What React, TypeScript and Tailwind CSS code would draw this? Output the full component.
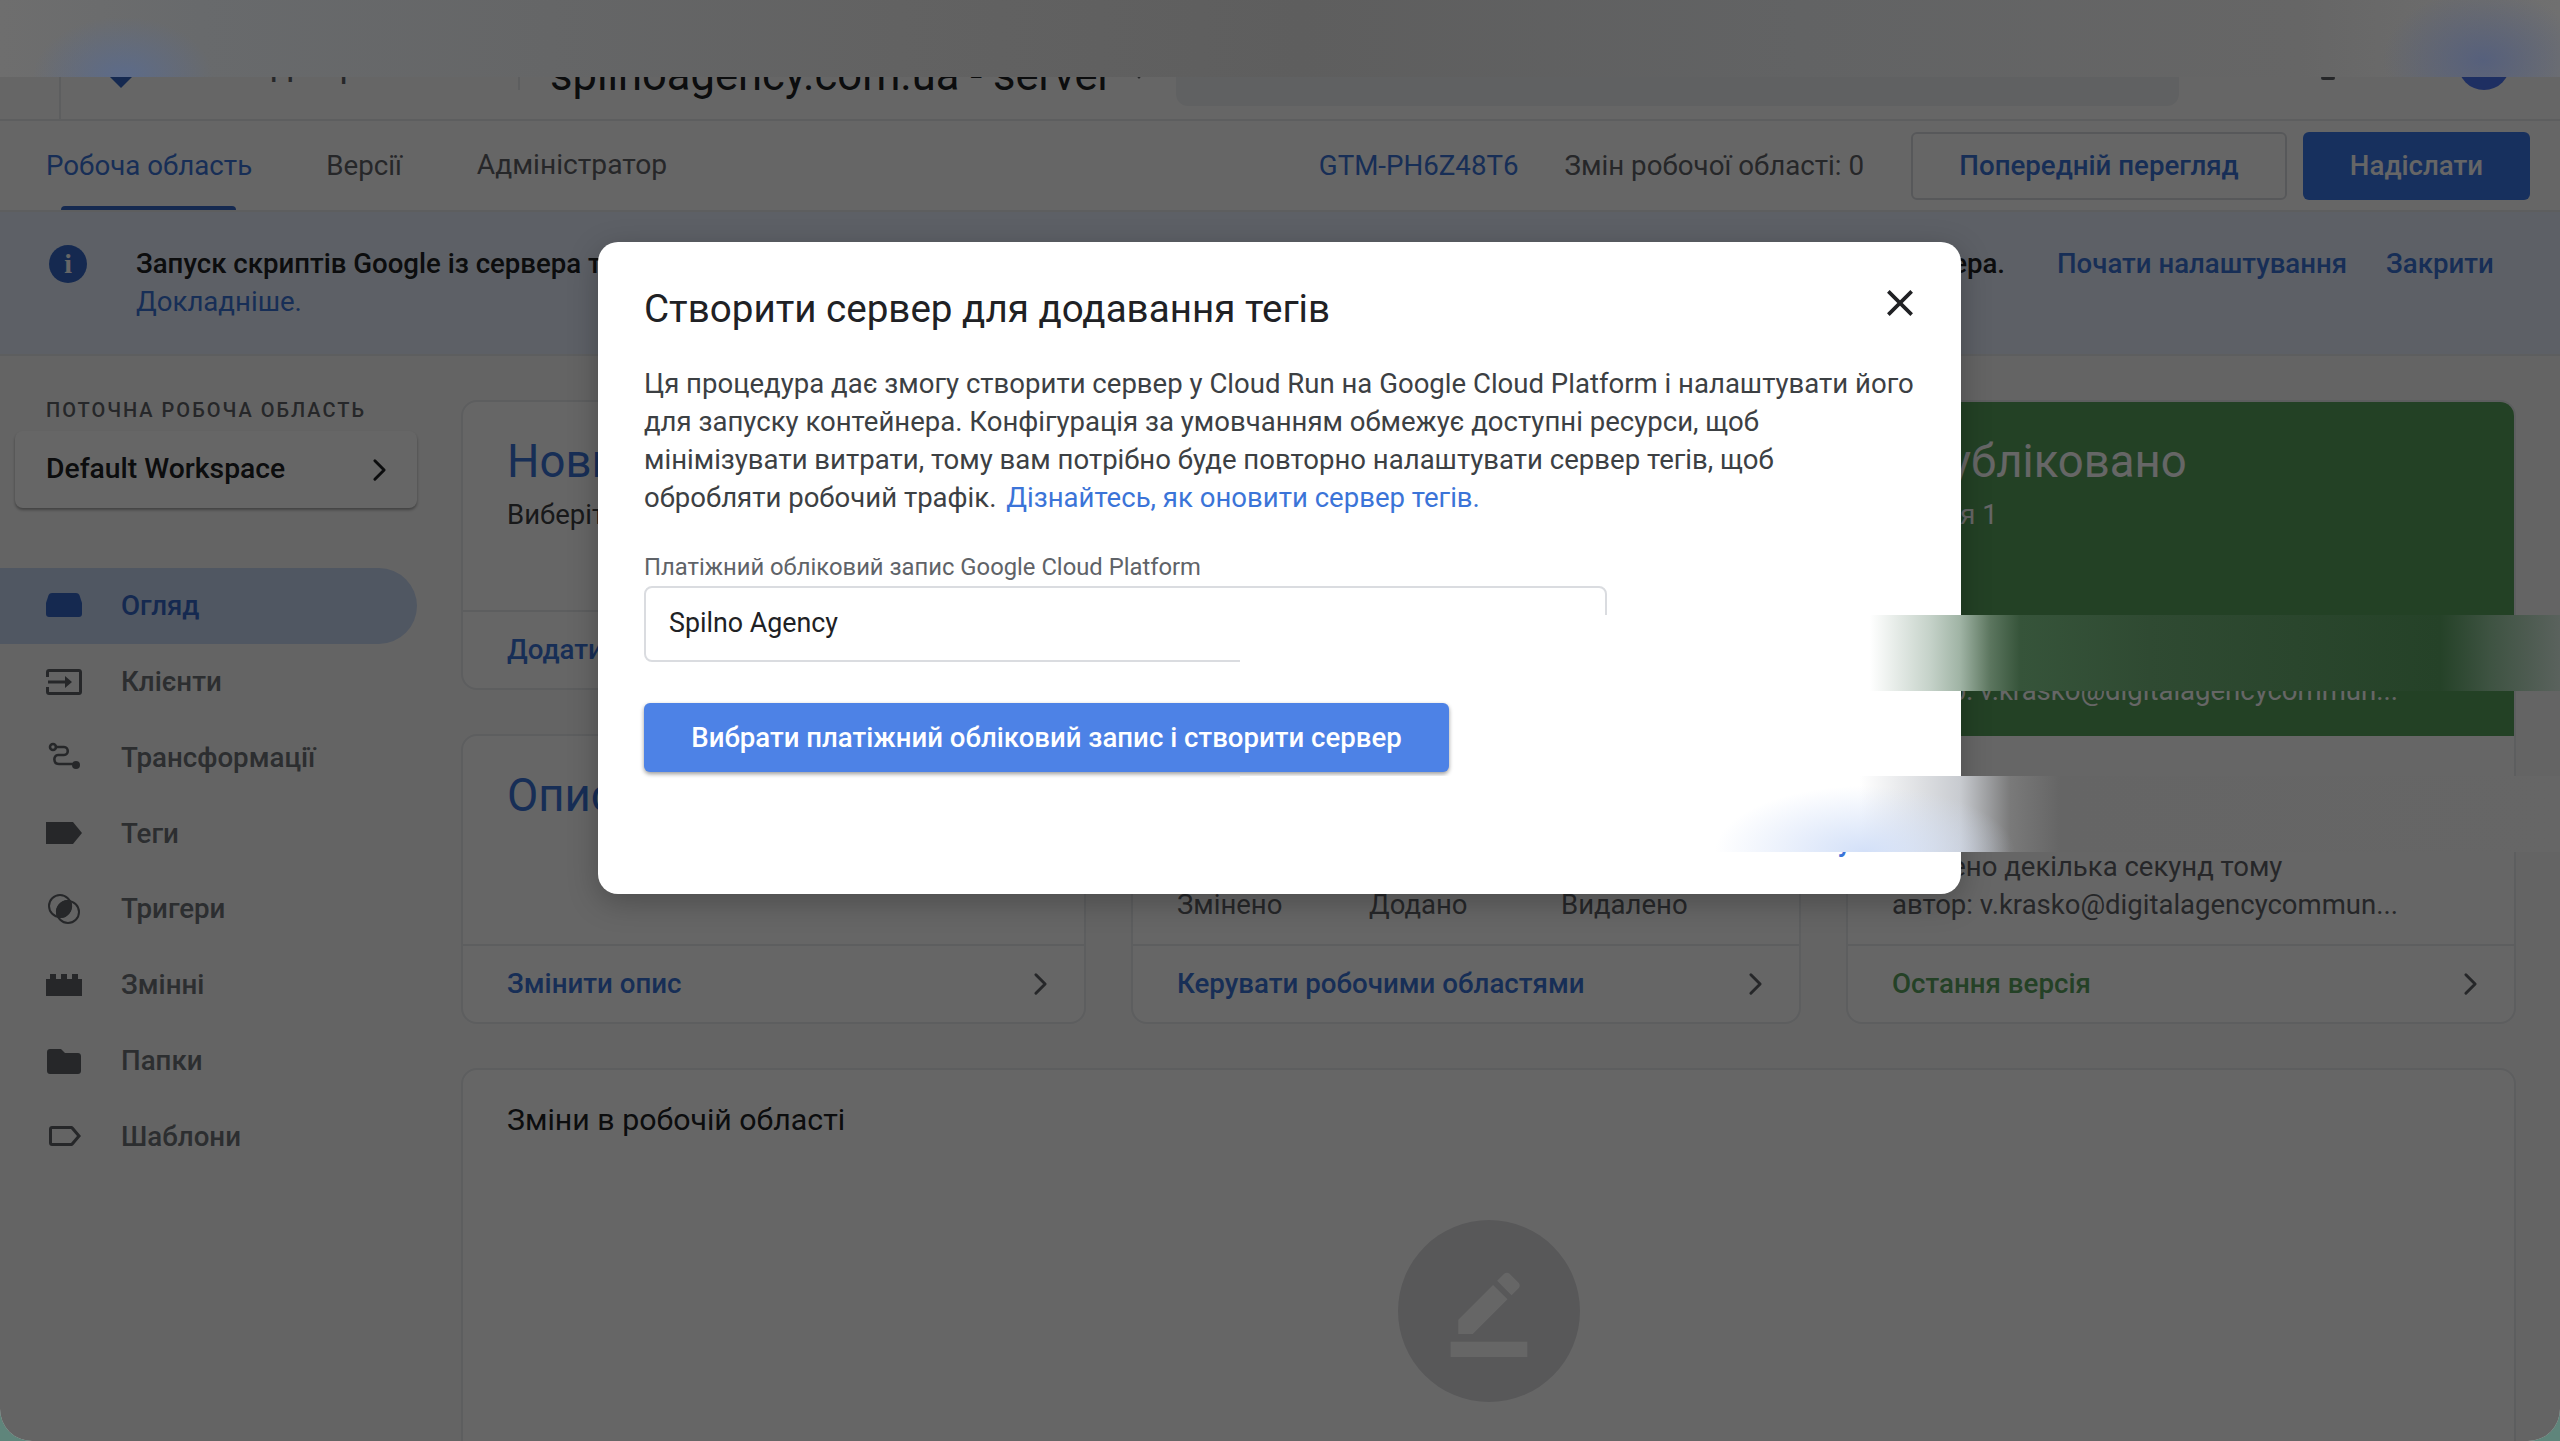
import type { ReactNode } from 'react'

const FONT = "font-['Roboto','Noto_Sans',sans-serif]"

function Chevron({ className }: { className: string }) {
  return (
    <svg viewBox="0 0 16 26" className={className} fill="none" stroke="currentColor" strokeWidth="3.2" strokeLinecap="round" strokeLinejoin="round">
      <path d="M3 3l10 10L3 23" />
    </svg>
  )
}

const ICONS: Record<string, ReactNode> = {
  overview: <path d="M6 2h24c1.600 0 2.800.8 3.400 2L36 12v11c0 1.700-1.300 3-3 3H3c-1.700 0-3-1.300-3-3V12l2.600-8C3.200 2.800 4.400 2 6 2z" />,
  clients: (
    <>
      <path d="M3 2h30c1.700 0 3 1.300 3 3v20c0 1.700-1.300 3-3 3H3c-1.700 0-3-1.300-3-3v-5h3v5h30V5H3v5H0V5c0-1.700 1.300-3 3-3z" />
      <path d="M19 21l7-6-7-6v4.500H2v3h17z" />
    </>
  ),
  transforms: (
    <g fill="none" stroke="currentColor" strokeWidth="2.600" strokeLinecap="round">
      <circle cx="7" cy="5" r="3" />
      <path d="M10 5h8c5 0 5 8 0 8h-6c-5 0-5 9 1 9h13" />
      <circle cx="30" cy="23" r="4" fill="currentColor" stroke="none" />
    </g>
  ),
  tags: <path d="M0 4h27l9 11-9 11H0z" />,
  triggers: (
    <>
      <circle cx="14" cy="12" r="11" fill="none" stroke="currentColor" strokeWidth="2" />
      <circle cx="22" cy="18" r="11" fill="none" stroke="currentColor" strokeWidth="2" />
      <path d="M11.460 23.720A12 12 0 0 0 24.540 6.280A12 12 0 0 0 11.460 23.720z" />
    </>
  ),
  variables: <path d="M0 9h4V4h6v5h5V4h6v5h5V4h6v5h4v17H0z" />,
  folders: <path d="M4 3h11l4 4h13c1.700 0 3 1.300 3 3v15c0 1.700-1.300 3-3 3H4c-1.700 0-3-1.300-3-3V6c0-1.700 1.300-3 3-3z" />,
  templates: <path fillRule="evenodd" d="M6 5h19c1 0 2 .5 2.600 1.300L35 15l-7.400 8.700c-.6.8-1.600 1.300-2.600 1.300H6c-1.700 0-3-1.300-3-3V8c0-1.700 1.300-3 3-3zm0 3v14h19l6-7-6-7z" />,
}

const NAV = [
  { key: 'overview', label: 'Огляд', active: true },
  { key: 'clients', label: 'Клієнти' },
  { key: 'transforms', label: 'Трансформації' },
  { key: 'tags', label: 'Теги' },
  { key: 'triggers', label: 'Тригери' },
  { key: 'variables', label: 'Змінні' },
  { key: 'folders', label: 'Папки' },
  { key: 'templates', label: 'Шаблони' },
]

function Sidebar() {
  return (
    <aside className="w-[461px] shrink-0">
      <div className="pl-[46px] pt-[42px] text-[20px] leading-[24px] font-medium tracking-[2px] text-[#5f6368]">ПОТОЧНА РОБОЧА ОБЛАСТЬ</div>
      <div className="ml-[15px] mt-[9px] flex h-[77px] w-[402px] items-center justify-between rounded-[8px] bg-white pl-[31px] pr-[30px] shadow-[0_2px_3px_rgba(0,0,0,0.35)]">
        <span className="text-[28.3px] font-medium text-[#202124]">Default Workspace</span>
        <Chevron className="h-[24px] w-[15px] text-[#202124]" />
      </div>
      <nav className="mt-[60px]">
        {NAV.map(item => (
          <div key={item.key} className={item.active ? 'flex h-[75.8px] w-[417px] items-center rounded-r-full bg-[#c8d9f5] pl-[46px]' : 'flex h-[75.8px] w-[417px] items-center pl-[46px]'}>
            <svg viewBox="0 0 36 30" className={item.active ? 'h-[30px] w-[36px] fill-current text-[#3568c8]' : 'h-[30px] w-[36px] fill-current text-[#5f6368]'}>
              {ICONS[item.key]}
            </svg>
            <span className={item.active ? 'ml-[39px] text-[27.7px] font-medium text-[#3568c8]' : 'ml-[39px] text-[27.7px] font-medium text-[#6f7378]'}>{item.label}</span>
          </div>
        ))}
      </nav>
    </aside>
  )
}

function CardFooter({ label, green }: { label: string; green?: boolean }) {
  return (
    <div className="flex h-[78px] shrink-0 items-center justify-between border-t-2 border-[#e8eaed] pl-[44px] pr-[36px]">
      <span className={green ? 'text-[27.7px] font-medium text-[#5aa35f]' : 'text-[27.7px] font-medium text-[#3b74d8]'}>{label}</span>
      <Chevron className="h-[24px] w-[15px] text-[#5f6368]" />
    </div>
  )
}

function Card({ title, sub, footer }: { title: string; sub?: string; footer: string }) {
  return (
    <div className="flex h-[290px] flex-col rounded-[16px] border-2 border-[#e8eaed] bg-white">
      <div className="flex-1 pl-[44px] pt-[30px]">
        {/* the dialog covers the rest of these lines */}
        <div className="w-[130px] overflow-hidden whitespace-nowrap text-[45.5px] leading-[60px] text-[#3b74d8]">{title}</div>
        {sub && <div className="mt-[4px] w-[130px] overflow-hidden whitespace-nowrap text-[27.5px] leading-[38px] text-[#3c4043]">{sub}</div>}
      </div>
      <CardFooter label={footer} />
    </div>
  )
}

function MainArea() {
  return (
    <main className="flex-1 pr-[45px] pt-[44px]">
      <div className="grid grid-cols-[625px_670px_670px] gap-x-[45px]">
        <div className="flex flex-col gap-y-[44px]">
          <Card title="Новий тег" sub="Виберіть тип тега" footer="Додати новий тег" />
          <Card title="Опис" footer="Змінити опис" />
        </div>
        <div className="flex h-[624px] flex-col rounded-[16px] border-2 border-[#e8eaed] bg-white">
          <div className="flex flex-1 flex-col justify-end pb-[20px] pl-[44px] text-[27.5px] leading-[38px] text-[#5f6368]">
            <div className="flex">
              <span className="w-[192px]">Змінено</span>
              <span className="w-[192px]">Додано</span>
              <span>Видалено</span>
            </div>
          </div>
          <CardFooter label="Керувати робочими областями" />
        </div>
        <div className="flex h-[624px] flex-col overflow-hidden rounded-[16px] border-2 border-[#e8eaed] bg-white">
          <div className="h-[334px] shrink-0 bg-[#57a25c] pl-[44px] pt-[30px] text-white">
            <div className="text-[45.5px] leading-[60px]">Опубліковано</div>
            <div className="mt-[4px] text-[27.5px] leading-[38px]">Версія 1</div>
            <div className="mt-[100px] truncate pr-[60px] text-[27.5px] leading-[38px]">Змінено декілька секунд тому</div>
            <div className="truncate pr-[60px] text-[27.5px] leading-[38px]">автор: v.krasko@digitalagencycommun...</div>
          </div>
          <div className="flex flex-1 flex-col justify-between pb-[20px] pl-[44px] pt-[38px] text-[27.5px] leading-[38px] text-[#5f6368]">
            <div className="text-[32px] text-[#202124]">Поточна версія</div>
            <div>
              <div>Змінено декілька секунд тому</div>
              <div>автор: v.krasko@digitalagencycommun...</div>
            </div>
          </div>
          <CardFooter label="Остання версія" green />
        </div>
      </div>
      <div className="mt-[44px] h-[500px] rounded-[16px] border-2 border-[#e8eaed] bg-white pl-[44px] pt-[30px]">
        <div className="text-[30.3px] leading-[40px] text-[#202124]">Зміни в робочій області</div>
        <div className="ml-[891px] mt-[80px] flex h-[182px] w-[182px] items-center justify-center rounded-full bg-[#dcdcdf]">
          <svg viewBox="0 0 24 24" className="h-[92px] w-[92px] fill-white">
            <path d="M22 24H2v-4h20v4zM13.060 5.190l3.750 3.750L7.750 18H4v-3.750l9.060-9.060zm4.820 2.680-3.750-3.750 1.830-1.830c.39-.39 1.020-.39 1.410 0l2.340 2.340c.39.39.39 1.020 0 1.410l-1.830 1.830z" />
          </svg>
        </div>
      </div>
    </main>
  )
}

function Header() {
  return (
    <header className="flex h-[121px] items-start border-b-2 border-[#e8eaed] bg-white">
      <div className="ml-[59px] h-full w-[2px] bg-[#e8eaed]" />
      <svg viewBox="0 0 48 48" className="ml-[36px] mt-[44px] h-[48px] w-[48px] shrink-0">
        <path d="M24 44 6 26 24 8l18 18z" fill="#3568c8" />
      </svg>
      <span className="ml-[36px] mt-[42px] w-[337px] shrink-0 text-[36px] leading-[44px] text-[#5f6368]">Менеджер тегів</span>
      <div className="h-[90px] w-[2px] shrink-0 bg-[#e8eaed]" />
      <div className="ml-[30px] mt-[50px] flex w-[596px] shrink-0 items-center gap-x-[22px] text-[43.5px] leading-[52px] text-[#202124]">
        spilnoagency.com.ua - server
        <svg viewBox="0 0 10 6" className="h-[6px] w-[10px] fill-[#5f6368]">
          <path d="M0 0h10L5 6z" />
        </svg>
      </div>
      <div className="ml-[30px] h-[106px] w-[1003px] shrink-0 rounded-b-[12px] bg-[#f1f3f4]" />
      <div className="ml-[142px] mt-[76px] h-[4px] w-[14px] shrink-0 rounded-full bg-[#5f6368]" />
      <div className="ml-[123px] mt-[38px] h-[52px] w-[52px] shrink-0 rounded-full bg-[#4d75f5]" />
    </header>
  )
}

function TabBar() {
  return (
    <div className="flex h-[91px] items-center border-b-2 border-[#e8eaed] bg-white pl-[46px] pr-[30px] text-[27.7px]">
      <div className="relative flex h-full items-center text-[#3b74d8]">
        Робоча область
        <div className="absolute bottom-0 left-[15px] h-[4px] w-[175px] rounded-t-[4px] bg-[#3568c8]" />
      </div>
      <span className="ml-[74px] text-[#5f6368]">Версії</span>
      <span className="ml-[75px] text-[28.2px] text-[#5f6368]">Адміністратор</span>
      <span className="ml-auto text-[#3b74d8]">GTM-PH6Z48T6</span>
      <span className="ml-[46px] text-[#5f6368]">Змін робочої області: 0</span>
      <button className="ml-[47px] h-[68px] w-[376px] rounded-[6px] border-2 border-[#dadce0] font-medium text-[#3b74d8]">Попередній перегляд</button>
      <button className="ml-[16px] h-[68px] w-[227px] rounded-[6px] bg-[#3a78ea] font-medium text-white">Надіслати</button>
    </div>
  )
}

function Banner() {
  return (
    <div className="flex h-[144px] items-start border-b-2 border-[#e8eaed] bg-[#e8f0fe] pl-[49px] pt-[33px] text-[27.6px] leading-[38px] whitespace-nowrap">
      <div className="flex h-[38px] w-[38px] shrink-0 items-center justify-center rounded-full bg-[#3568c8] font-['Liberation_Serif',serif] font-bold text-white">i</div>
      <div className="ml-[49px] w-[1869px] shrink-0">
        <div className="flex justify-between font-medium text-[#202124]">
          <span>Запуск скриптів Google із сервера тегів</span>
          <span>сервера.</span>
        </div>
        <div className="text-[#3b74d8]">Докладніше.</div>
      </div>
      <span className="ml-[52px] font-medium text-[#3b74d8]">Почати налаштування</span>
      <span className="ml-[39px] font-medium text-[#3b74d8]">Закрити</span>
    </div>
  )
}

function Dialog() {
  return (
    <div className="absolute left-[598px] top-[242px] flex h-[652px] w-[1363px] flex-col rounded-[20px] bg-white pl-[46px] pt-[40px] shadow-[0_8px_30px_rgba(0,0,0,0.25)]">
      <div className="flex items-start justify-between pr-[41px]">
        <h2 className="text-[38.6px] leading-[54px] font-normal text-[#202124]">Створити сервер для додавання тегів</h2>
        <svg viewBox="0 0 24 24" className="mt-[1px] h-[40px] w-[40px] fill-none stroke-[#202124] stroke-[2.2]">
          <path d="M5 5l14 14M19 5L5 19" />
        </svg>
      </div>
      <p className="mt-[28.500px] w-[1290px] text-[27.55px] leading-[38px] text-[#3c4043]">
        Ця процедура дає змогу створити сервер у Cloud Run на Google Cloud Platform і налаштувати його
        <br />
        для запуску контейнера. Конфігурація за умовчанням обмежує доступні ресурси, щоб
        <br />
        мінімізувати витрати, тому вам потрібно буде повторно налаштувати сервер тегів, щоб
        <br />
        обробляти робочий трафік. <span className="ml-[3px] text-[#3b74d8]">Дізнайтесь, як оновити сервер тегів.</span>
      </p>
      <label className="mt-[34px] text-[23.8px] leading-[32px] text-[#5f6368]">Платіжний обліковий запис Google Cloud Platform</label>
      <div className="mt-[3px] flex h-[76px] w-[963px] items-center rounded-[8px] border-2 border-[#dadce0] pl-[23px] text-[26.8px] text-[#202124]">Spilno Agency</div>
      <button className="mt-[41.500px] h-[69px] w-[805px] rounded-[6px] bg-[#4d82e6] text-[27.6px] font-medium text-white shadow-[0_2px_4px_rgba(0,0,0,0.4)]">Вибрати платіжний обліковий запис і створити сервер</button>
      <div className="mt-[49px] self-end pr-[50px] text-[27.6px] font-medium text-[#3b74d8]">Скасувати</div>
    </div>
  )
}

export default function App() {
  return (
    <div className={`relative h-[1441px] w-[2560px] overflow-hidden bg-[#5f857b] ${FONT}`}>
      <div className="relative h-full overflow-hidden rounded-b-[32px] bg-[#fafafa]">
        <Header />
        <TabBar />
        <Banner />
        <div className="flex">
          <Sidebar />
          <MainArea />
        </div>
        <div className="absolute inset-0 bg-black/60" />
        <Dialog />
        {/* blurred-out bits of the original screenshot */}
        <div className="absolute left-0 top-0 h-[77px] w-full bg-[radial-gradient(ellipse_90px_60px_at_123px_77px,#5c6b8a,transparent),radial-gradient(ellipse_100px_70px_at_2483px_60px,#56607c,transparent),linear-gradient(90deg,#6e6e6e_0,#686a6c_200px,#626262_900px,#5e5e5e_1300px,#626364_1800px,#666666_2300px,#707070_100%)]" />
        <div className="absolute left-[1240px] top-[615px] h-[76px] w-[1320px] bg-[linear-gradient(90deg,#ffffff_0,#ffffff_630px,#c5d2c9_690px,#a0b4a5_720px,#5c765f_750px,#36543a_780px,#2f4a32_910px,#254228_1200px,#3e5342_1250px,#5a625d_100%)]" />
        <div className="absolute left-[1240px] top-[776px] h-[76px] w-[1320px] bg-[radial-gradient(ellipse_150px_66px_at_625px_100%,#d3e0f8,transparent),linear-gradient(90deg,#ffffff_0,#ffffff_620px,#c8cbd0_720px,#7a7a7a_770px,#656565_820px,#666666_100%)]" />
      </div>
    </div>
  )
}
